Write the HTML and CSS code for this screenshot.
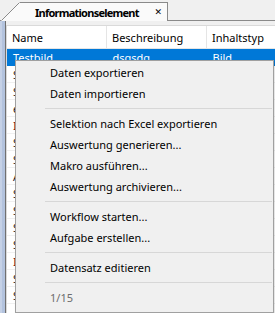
FILE: index.html
```html
<!DOCTYPE html>
<html lang="de">
<head>
    <meta charset="UTF-8">
    <title>Informationselement</title>
    <link rel="stylesheet" href="styles.css">
</head>
<body>
    <div class="tabstrip">
        <div class="tab">
            <svg class="tab-edge" width="19" height="19" viewBox="0 0 19 19">
                <polygon points="0,18.5 18,0.5 19,0.5 19,19 0,19" fill="#fafafa"/>
                <line x1="0.5" y1="18.5" x2="18.5" y2="0.5" stroke="#8a8a8a" stroke-width="1"/>
            </svg>
            <div class="tab-body">
                <span class="tab-title">Informationselement</span>
                <span class="tab-close">&#x2715;</span>
            </div>
        </div>
    </div>

    <div class="frame">
        <div class="dock-edge"></div>
        <div class="panel">
            <div class="grid-wrap">
                <table class="grid">
                    <thead>
                        <tr>
                            <th class="col-name">Name</th>
                            <th class="col-desc">Beschreibung</th>
                            <th class="col-type">Inhaltstyp</th>
                        </tr>
                    </thead>
                    <tbody>
                        <tr class="selected"><td>Testbild</td><td>dsgsdg</td><td>Bild</td></tr>
                        <tr><td>Schild</td><td></td><td></td></tr>
                        <tr><td>Skizze</td><td></td><td></td></tr>
                        <tr><td>email</td><td></td><td></td></tr>
                        <tr class="odd"><td>Info</td><td></td><td></td></tr>
                        <tr><td>Scan</td><td></td><td></td></tr>
                        <tr><td>Scan 2</td><td></td><td></td></tr>
                        <tr><td>Anhang</td><td></td><td></td></tr>
                        <tr><td>Skizze 2</td><td></td><td></td></tr>
                        <tr><td>Schreiben</td><td></td><td></td></tr>
                        <tr><td>Schema</td><td></td><td></td></tr>
                        <tr><td>Scan 3</td><td></td><td></td></tr>
                        <tr class="odd"><td>Info 2</td><td></td><td></td></tr>
                        <tr><td>Scan 4</td><td></td><td></td></tr>
                        <tr><td>Scan 5</td><td></td><td></td></tr>
                    </tbody>
                </table>
            </div>
        </div>
    </div>

    <!-- Kontextmenü -->
    <div class="ctx-menu">
        <div class="ctx-item">Daten exportieren</div>
        <div class="ctx-item">Daten importieren</div>
        <div class="ctx-sep"></div>
        <div class="ctx-item">Selektion nach Excel exportieren</div>
        <div class="ctx-item">Auswertung generieren...</div>
        <div class="ctx-item">Makro ausführen...</div>
        <div class="ctx-item">Auswertung archivieren...</div>
        <div class="ctx-sep"></div>
        <div class="ctx-item">Workflow starten...</div>
        <div class="ctx-item">Aufgabe erstellen...</div>
        <div class="ctx-sep"></div>
        <div class="ctx-item">Datensatz editieren</div>
        <div class="ctx-sep"></div>
        <div class="ctx-item disabled">1/15</div>
    </div>
</body>
</html>
```

FILE: styles.css
```css
body {
    margin: 0;
    width: 275px;
    height: 313px;
    overflow: hidden;
    position: relative;
    background-color: #f0f0f0;
    font-family: "Noto Sans", "Open Sans", sans-serif;
    font-size: 11px;
    color: #000;
}

/* Tab strip */
.tabstrip {
    height: 21px;
    padding-left: 1px;
    padding-top: 1px;
    box-sizing: border-box;
    border-bottom: 1px solid #8a8a8a;
    display: flex;
    align-items: flex-end;
}

.tab {
    display: flex;
    align-items: flex-end;
    margin-bottom: -1px;
}

.tab-edge {
    display: block;
}

.tab-body {
    width: 148px;
    height: 19px;
    box-sizing: border-box;
    border-top: 1px solid #8a8a8a;
    border-right: 1px solid #8a8a8a;
    background-color: #fafafa;
    display: flex;
    align-items: center;
    padding-left: 15px;
}

.tab-title {
    font-weight: bold;
    letter-spacing: -0.75px;
    white-space: nowrap;
}

.tab-close {
    margin-left: auto;
    margin-right: 5px;
    font-size: 9px;
    font-family: "DejaVu Sans", sans-serif;
}

/* Frame */
.frame {
    display: flex;
    height: 292px;
}

.dock-edge {
    flex-shrink: 0;
    width: 5px;
    background: linear-gradient(to right, #c5d1e6 0, #c5d1e6 2px, #b3c3de 2px);
    border-right: 1px solid #707070;
}

.panel {
    flex: 1;
    min-width: 0;
    padding-top: 4px;
    background-color: #f0f0f0;
}

.grid-wrap {
    height: 100%;
    overflow: hidden;
    background-color: #fff;
    border-left: 1px solid #dadada;
    border-top: 1px solid #dadada;
}

.grid {
    border-collapse: collapse;
    table-layout: fixed;
    width: 300px;
}

.grid th {
    height: 22px;
    text-align: left;
    font-weight: normal;
    padding: 0 0 0 5px;
    border-right: 1px solid #e5e5e5;
    border-bottom: 1px solid #e5e5e5;
}

.col-name { width: 94px; }
.col-desc { width: 94px; }

.grid td {
    height: 16px;
    padding: 0 0 0 6px;
    border-bottom: 1px solid #f0f0f0;
    white-space: nowrap;
    overflow: hidden;
    color: #1c1c1c;
}

.grid tr.odd td {
    color: #7a1010;
}

.grid tr.selected td {
    background-color: #0078d7;
    color: #fff;
    border-bottom-color: #0078d7;
}

/* Context menu */
.ctx-menu {
    position: absolute;
    left: 15px;
    top: 60px;
    width: 259px;
    box-sizing: border-box;
    padding: 1px 0 4px;
    background-color: #f0f0f0;
    border: 1px solid #a0a0a0;
    box-shadow: 1px 1px 2px rgba(0, 0, 0, 0.15);
}

.ctx-item {
    height: 21px;
    line-height: 21px;
    padding-left: 34px;
}

.ctx-item.disabled {
    color: #6d6d6d;
}

.ctx-sep {
    height: 1px;
    margin: 4px 1px 4px 29px;
    background-color: #d7d7d7;
}
```
